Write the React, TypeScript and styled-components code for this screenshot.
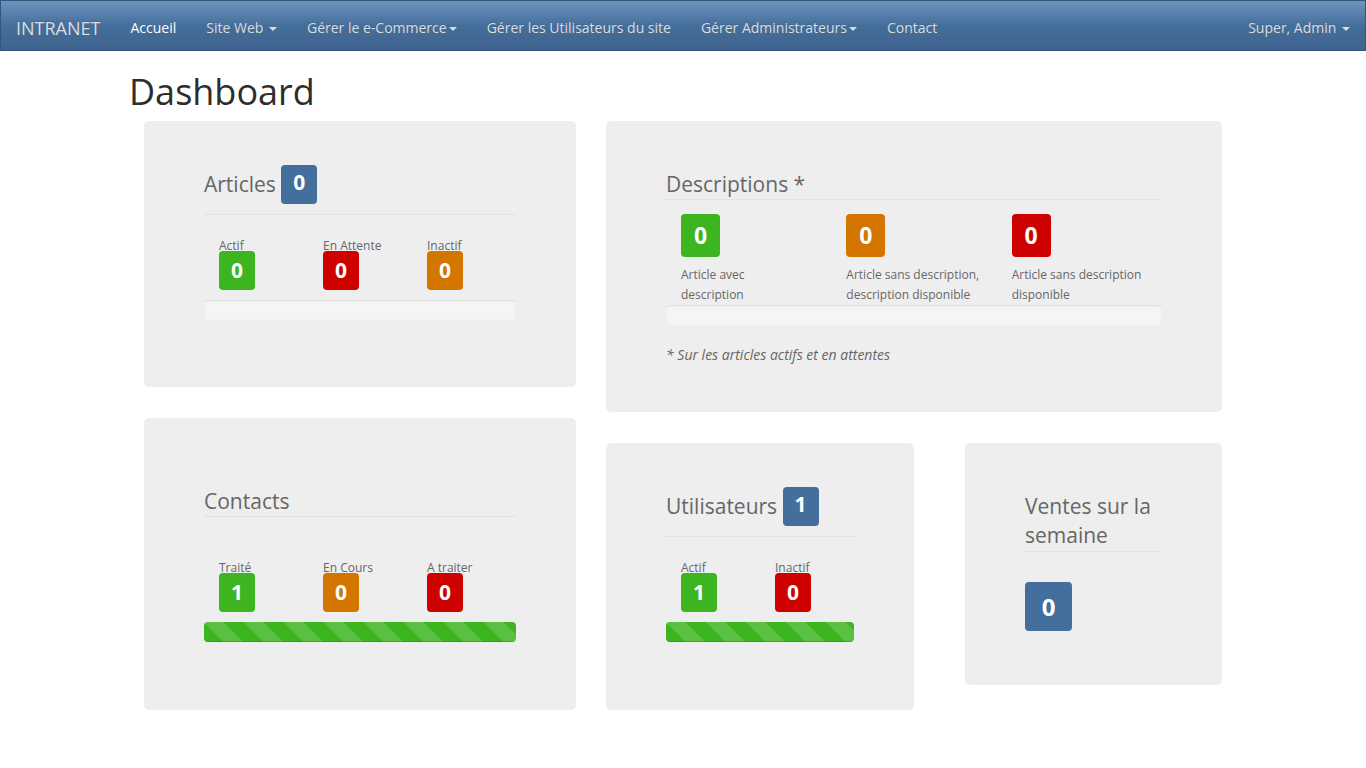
import React from 'react';
import styled, { createGlobalStyle, css } from 'styled-components';

type Tone = 'green' | 'orange' | 'red' | 'blue';

const tones: Record<Tone, string> = {
  green: '#3cb521',
  orange: '#d47500',
  red: '#cd0200',
  blue: '#446e9b',
};

const GlobalStyle = createGlobalStyle`
  * { box-sizing: border-box; }
  html, body { margin: 0; padding: 0; background: #fff; }
  body {
    font-family: "Open Sans", "Helvetica Neue", Arial, sans-serif;
    font-size: 14px;
    line-height: 1.42857;
    color: #666;
  }
`;

const Navbar = styled.nav`
  height: 51px;
  display: flex;
  align-items: flex-start;
  justify-content: space-between;
  background-image: linear-gradient(#6d94bf, #446e9b 50%, #3e648d);
  border: 1px solid #345578;
`;

const NavLeft = styled.div`
  display: flex;
  align-items: flex-start;
`;

const Brand = styled.a`
  display: block;
  padding: 17px 15px 12px 15px;
  font-size: 18px;
  line-height: 20px;
  color: #ddd;
  text-decoration: none;
  text-shadow: 0 -1px 0 rgba(0, 0, 0, 0.1);
`;

const NavList = styled.ul`
  display: flex;
  list-style: none;
  margin: 0;
  padding: 0;
`;

const NavLink = styled.a<{ $active?: boolean }>`
  display: block;
  padding: 17px 15px 12px;
  font-size: 14px;
  line-height: 20px;
  color: ${(p) => (p.$active ? '#fff' : '#ddd')};
  text-decoration: none;
  white-space: nowrap;
  text-shadow: 0 -1px 0 rgba(0, 0, 0, 0.1);
`;

const Caret = styled.span`
  display: inline-block;
  width: 0;
  height: 0;
  margin-left: 2px;
  vertical-align: middle;
  border-top: 4px solid;
  border-left: 4px solid transparent;
  border-right: 4px solid transparent;
`;

const Page = styled.main`
  width: 1108px;
  margin: 0 auto;
`;

const PageTitle = styled.h1`
  margin: 21px 0 9px;
  font-size: 36px;
  font-weight: 400;
  line-height: 1.1;
  color: #2d2d2d;
`;

const Board = styled.div`
  width: 1078px;
  margin: 0 auto;
  display: flex;
  align-items: flex-start;
  gap: 30px;
`;

const Column = styled.div<{ $w: number }>`
  width: ${(p) => p.$w}px;
  display: flex;
  flex-direction: column;
  gap: 31px;
`;

const SubRow = styled.div`
  display: flex;
  align-items: flex-start;
  gap: 51px;
`;

const Panel = styled.section<{ $w?: number; $pt: number; $pb: number }>`
  ${(p) => p.$w && css`width: ${p.$w}px;`}
  background: #eeeeee;
  border-radius: 5px;
  padding: ${(p) => p.$pt}px 60px ${(p) => p.$pb}px;
`;

const PanelTitle = styled.h3`
  margin: 0;
  padding-top: 1px;
  font-size: 21px;
  font-weight: 400;
  line-height: 1.4;
  color: #666;
  border-bottom: 1px solid #e2e2e2;
`;

const TitleBadge = styled.span`
  display: inline-block;
  vertical-align: 2px;
  margin-bottom: 10px;
  padding: 7px 12px 11px;
  font-size: 21px;
  font-weight: 700;
  line-height: 21px;
  color: #fff;
  background: ${tones.blue};
  border-radius: 4px;
`;

const StatRow = styled.div<{ $mt: number }>`
  display: flex;
  margin-top: ${(p) => p.$mt}px;
`;

const Stat = styled.div`
  flex: 1;
  padding-left: 15px;
`;

const StatLabel = styled.span`
  display: block;
  font-size: 12px;
  line-height: 10px;
  color: #666;
`;

const sizes = {
  sm: { w: 36, h: 39, f: 21 },
  md: { w: 39, h: 43, f: 23 },
  lg: { w: 47, h: 49, f: 24 },
};

const Count = styled.div<{ $tone: Tone; $size: keyof typeof sizes }>`
  width: ${(p) => sizes[p.$size].w}px;
  height: ${(p) => sizes[p.$size].h}px;
  line-height: ${(p) => sizes[p.$size].h}px;
  font-size: ${(p) => sizes[p.$size].f}px;
  font-weight: 700;
  text-align: center;
  color: #fff;
  background: ${(p) => tones[p.$tone]};
  border-radius: 4px;
`;

const Progress = styled.div<{ $mt: number }>`
  height: 20px;
  margin-top: ${(p) => p.$mt}px;
  overflow: hidden;
  background: #f5f5f5;
  border-radius: 4px;
  box-shadow: inset 0 1px 2px rgba(0, 0, 0, 0.1);
`;

const ProgressBar = styled.div`
  height: 100%;
  background-color: ${tones.green};
  background-image: linear-gradient(
    45deg,
    rgba(255, 255, 255, 0.15) 25%,
    transparent 25%,
    transparent 50%,
    rgba(255, 255, 255, 0.15) 50%,
    rgba(255, 255, 255, 0.15) 75%,
    transparent 75%,
    transparent
  );
  background-size: 40px 40px;
  box-shadow: inset 0 -1px 0 rgba(0, 0, 0, 0.15);
`;

const DescRow = styled.div`
  display: flex;
  margin-top: 14px;
`;

const DescItem = styled.div`
  flex: 1;
  padding: 0 15px;
`;

const DescLabel = styled.p`
  margin: 6px 0 0;
  padding-top: 2px;
  font-size: 12px;
  line-height: 20px;
  color: #666;
`;

const Note = styled.p`
  margin: 20px 0 0;
  font-size: 14px;
  line-height: 20px;
  font-style: italic;
  color: #666;
`;

const SalesCount = styled(Count)`
  margin-top: 30px;
`;

interface StatItem {
  label: string;
  value: number;
  tone: Tone;
}

const StatBlock: React.FC<{ items: StatItem[]; mt: number; bar: number }> = ({ items, mt, bar }) => (
  <>
    <StatRow $mt={mt}>
      {items.map((it) => (
        <Stat key={it.label}>
          <StatLabel>{it.label}</StatLabel>
          <Count $tone={it.tone} $size="sm">{it.value}</Count>
        </Stat>
      ))}
    </StatRow>
    <Progress $mt={10}>
      {bar > 0 && <ProgressBar style={{ width: `${bar}%` }} />}
    </Progress>
  </>
);

const navItems = [
  { label: 'Accueil', active: true },
  { label: 'Site Web ', caret: true },
  { label: 'Gérer le e-Commerce', caret: true },
  { label: 'Gérer les Utilisateurs du site' },
  { label: 'Gérer Administrateurs', caret: true },
  { label: 'Contact' },
];

const App: React.FC = () => (
  <>
    <GlobalStyle />
    <Navbar>
      <NavLeft>
        <Brand href="#">INTRANET</Brand>
        <NavList>
          {navItems.map((n) => (
            <li key={n.label}>
              <NavLink href="#" $active={n.active}>
                {n.label}
                {n.caret && <Caret />}
              </NavLink>
            </li>
          ))}
        </NavList>
      </NavLeft>
      <NavList>
        <li>
          <NavLink href="#">
            Super, Admin <Caret />
          </NavLink>
        </li>
      </NavList>
    </Navbar>

    <Page>
      <PageTitle>Dashboard</PageTitle>
      <Board>
        <Column $w={432}>
          <Panel $pt={43} $pb={67}>
            <PanelTitle>
              Articles <TitleBadge>0</TitleBadge>
            </PanelTitle>
            <StatBlock
              mt={26}
              bar={0}
              items={[
                { label: 'Actif', value: 0, tone: 'green' },
                { label: 'En Attente', value: 0, tone: 'red' },
                { label: 'Inactif', value: 0, tone: 'orange' },
              ]}
            />
          </Panel>
          <Panel $pt={68} $pb={68}>
            <PanelTitle>Contacts</PanelTitle>
            <StatBlock
              mt={46}
              bar={100}
              items={[
                { label: 'Traité', value: 1, tone: 'green' },
                { label: 'En Cours', value: 0, tone: 'orange' },
                { label: 'A traiter', value: 0, tone: 'red' },
              ]}
            />
          </Panel>
        </Column>

        <Column $w={616}>
          <Panel $pt={48} $pb={47}>
            <PanelTitle>Descriptions *</PanelTitle>
            <DescRow>
              <DescItem>
                <Count $tone="green" $size="md">0</Count>
                <DescLabel>
                  Article avec
                  <br />
                  description
                </DescLabel>
              </DescItem>
              <DescItem>
                <Count $tone="orange" $size="md">0</Count>
                <DescLabel>Article sans description, description disponible</DescLabel>
              </DescItem>
              <DescItem>
                <Count $tone="red" $size="md">0</Count>
                <DescLabel>Article sans description disponible</DescLabel>
              </DescItem>
            </DescRow>
            <Progress $mt={0} />
            <Note>* Sur les articles actifs et en attentes</Note>
          </Panel>

          <SubRow>
            <Panel $w={308} $pt={43} $pb={68}>
              <PanelTitle>
                Utilisateurs <TitleBadge>1</TitleBadge>
              </PanelTitle>
              <StatBlock
                mt={26}
                bar={100}
                items={[
                  { label: 'Actif', value: 1, tone: 'green' },
                  { label: 'Inactif', value: 0, tone: 'red' },
                ]}
              />
            </Panel>
            <Panel $w={257} $pt={48} $pb={54}>
              <PanelTitle>Ventes sur la semaine</PanelTitle>
              <SalesCount $tone="blue" $size="lg">0</SalesCount>
            </Panel>
          </SubRow>
        </Column>
      </Board>
    </Page>
  </>
);

export default App;
